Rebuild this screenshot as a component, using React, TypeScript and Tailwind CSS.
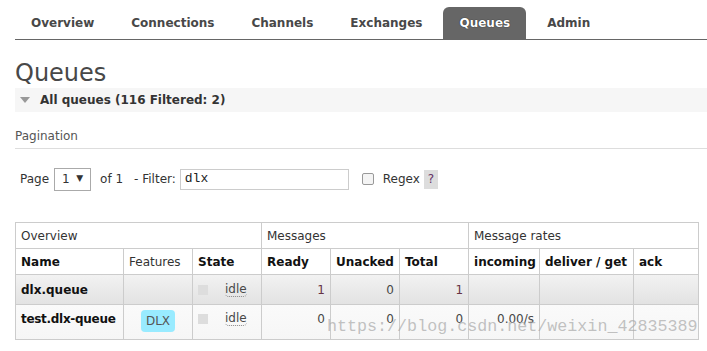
const tabs = ["Overview", "Connections", "Channels", "Exchanges", "Queues", "Admin"];

const cols = [108, 69, 69, 69, 69, 69, 71, 94, 65];

const Idle = () => (
  <div className="flex items-center">
    <span className="ml-[5px] inline-block h-[10px] w-[10px] bg-[#ddd]" />
    <span className="ml-[17px] rounded-b-[4px] border-b border-dotted border-[#888] leading-[14px]">
      idle
    </span>
  </div>
);

const App = () => {
  return (
    <div
      className="relative h-[351px] w-[707px] overflow-hidden bg-white text-[12px] text-[#484848]"
      style={{ fontFamily: '"DejaVu Sans", Verdana, sans-serif' }}
    >
      {/* Nav */}
      <div className="ml-[15px] flex h-[40px] items-end gap-[5px] border-b border-[#666] pt-[7px]">
        {tabs.map((t) => (
          <div
            key={t}
            className={
              t === "Queues"
                ? "flex h-[32px] items-center rounded-t-[6px] bg-[#666] px-[16px] font-bold text-white [text-shadow:0_0_1px_#000]"
                : "flex h-[32px] items-center px-[16px] font-bold text-[#484848]"
            }
          >
            {t}
          </div>
        ))}
      </div>

      <div className="pl-[15px]">
        <h1 className="mt-[18px] h-[30px] text-[24px] leading-[30px] text-[#484848]">Queues</h1>

        {/* Section header */}
        <div className="flex h-[24px] items-center bg-[#f6f6f6]">
          <svg width="10" height="6" viewBox="0 0 10 6" className="ml-[5px]">
            <path d="M0 0 H10 L5 6 Z" fill="#999" />
          </svg>
          <span className="ml-[10px] font-bold text-[#333]">All queues (116 Filtered: 2)</span>
        </div>

        {/* Pagination */}
        <div className="mt-[15px] border-b border-[#ddd] pb-[3px] leading-[18px] text-[#555]">Pagination</div>

        <div className="mt-[18px] flex h-[24px] items-center text-[#333]">
          <span className="ml-[5px]">Page</span>
          <div className="ml-[5px] flex h-[23px] w-[37px] items-center justify-between border border-[#aaa] bg-white px-[7px]">
            <span>1</span>
            <span className="text-[9px]">▼</span>
          </div>
          <span className="ml-[9px]">of 1</span>
          <span className="ml-[11px]">- Filter:</span>
          <div
            className="ml-[4px] flex h-[21px] w-[169px] items-center border border-[#ccc] px-[4px] text-[13px] text-[#222]"
            style={{ fontFamily: '"Liberation Mono", monospace' }}
          >
            dlx
          </div>
          <span className="ml-[13px] inline-block h-[12px] w-[12px] rounded-[2px] border border-[#999] bg-[#f4f4f4]" />
          <span className="ml-[9px]">Regex</span>
          <span className="ml-[4px] flex h-[19px] w-[14px] items-center justify-center bg-[#ddd] text-[#636]">?</span>
        </div>

        {/* Table */}
        <table className="mt-[31px] w-[683px] table-fixed border-collapse">
          <colgroup>
            {cols.map((w, i) => (
              <col key={i} style={{ width: w }} />
            ))}
          </colgroup>
          <thead>
            <tr className="h-[26px]">
              <th colSpan={3} className="border border-[#ccc] px-[5px] text-left font-normal text-[#333]">
                Overview
              </th>
              <th colSpan={3} className="border border-[#ccc] px-[5px] text-left font-normal text-[#333]">
                Messages
              </th>
              <th colSpan={3} className="border border-[#ccc] px-[5px] text-left font-normal text-[#333]">
                Message rates
              </th>
            </tr>
            <tr className="h-[26px] text-left text-[#111]">
              <th className="border border-[#ccc] px-[5px]">Name</th>
              <th className="border border-[#ccc] px-[5px] font-normal text-[#333]">Features</th>
              <th className="border border-[#ccc] px-[5px]">State</th>
              <th className="border border-[#ccc] px-[5px]">Ready</th>
              <th className="border border-[#ccc] px-[5px]">Unacked</th>
              <th className="border border-[#ccc] px-[5px]">Total</th>
              <th className="border border-[#ccc] px-[5px]">incoming</th>
              <th className="whitespace-nowrap border border-[#ccc] px-[5px]">deliver / get</th>
              <th className="border border-[#ccc] px-[5px]">ack</th>
            </tr>
          </thead>
          <tbody>
            <tr className="h-[30px] bg-gradient-to-b from-[#f2f2f2] to-[#e2e2e2]">
              <td className="border border-[#ccc] px-[5px] font-bold text-[#111]">dlx.queue</td>
              <td className="border border-[#ccc]" />
              <td className="border border-[#ccc]">
                <Idle />
              </td>
              <td className="border border-[#ccc] px-[5px] text-right text-[#634]">1</td>
              <td className="border border-[#ccc] px-[5px] text-right">0</td>
              <td className="border border-[#ccc] px-[5px] text-right text-[#634]">1</td>
              <td className="border border-[#ccc]" />
              <td className="border border-[#ccc]" />
              <td className="border border-[#ccc]" />
            </tr>
            <tr className="h-[35px] bg-gradient-to-b from-[#fafafa] to-[#f6f6f6] align-top">
              <td className="whitespace-nowrap border border-[#ccc] pl-[5px] pt-[5px] font-bold tracking-[-0.3px] text-[#111]">
                test.dlx-queue
              </td>
              <td className="border border-[#ccc] pt-[5px] text-center">
                <span className="inline-block rounded-[4px] bg-[#99ebff] px-[5px] py-[2px] text-[#555]">DLX</span>
              </td>
              <td className="border border-[#ccc] pt-[6px]">
                <Idle />
              </td>
              <td className="border border-[#ccc] px-[5px] pt-[5px] text-right">0</td>
              <td className="border border-[#ccc] px-[5px] pt-[5px] text-right">0</td>
              <td className="border border-[#ccc] px-[5px] pt-[5px] text-right">0</td>
              <td className="border border-[#ccc] px-[5px] pt-[5px] text-right">0.00/s</td>
              <td className="border border-[#ccc]" />
              <td className="border border-[#ccc]" />
            </tr>
          </tbody>
        </table>
      </div>

      {/* Watermark */}
      <div
        className="pointer-events-none absolute left-[327px] top-[317px] whitespace-nowrap text-[16.7px] leading-[20px] text-[#a8a8a8]/70"
        style={{ fontFamily: '"Liberation Mono", monospace' }}
      >
        https://blog.csdn.net/weixin_42835389
      </div>
    </div>
  );
};

export default App;
